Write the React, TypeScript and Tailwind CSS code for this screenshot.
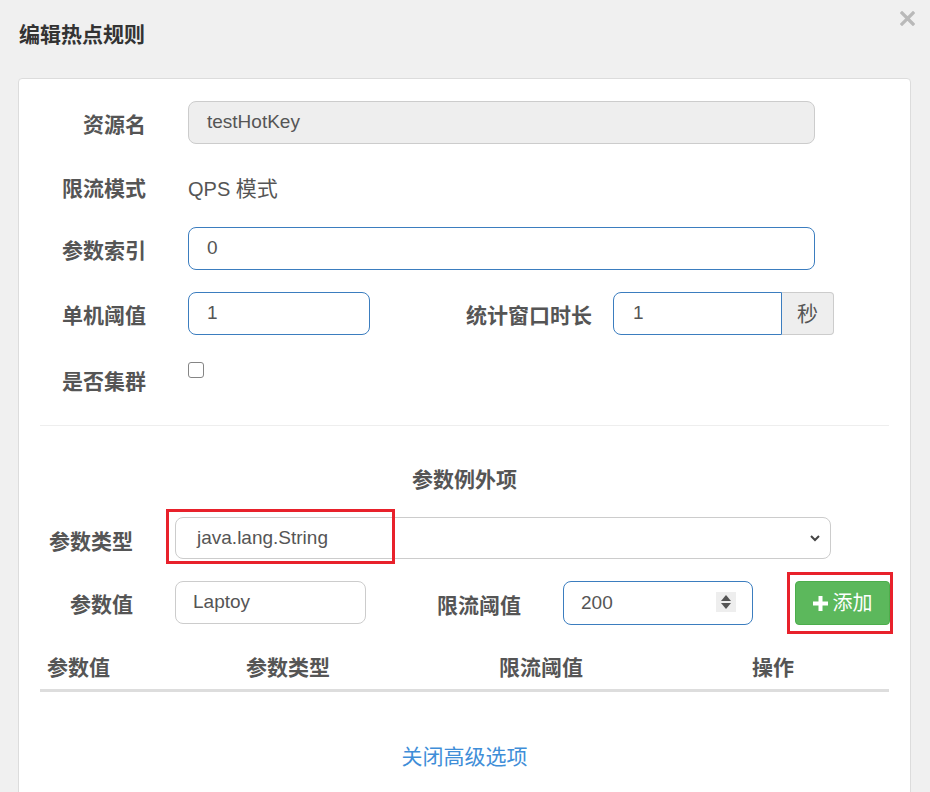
import React from "react";

const F = "font-['Liberation_Sans','Noto_Sans_CJK_SC',sans-serif]";

function Label({ w, children, pt = "pt-[9px]" }: { w: string; children: React.ReactNode; pt?: string }) {
  return (
    <div className={`${w} shrink-0 text-right text-[21px] leading-[30px] font-bold text-[#555]`}>
      <div className={pt}>{children}</div>
    </div>
  );
}

export default function App() {
  return (
    <div className={`${F} min-h-[792px] w-[930px] overflow-hidden bg-[#f0f0f0]`}>
      {/* header */}
      <div className="flex items-start justify-between pl-[19px] pr-[15px]">
        <div className="mt-[20px] text-[21px] leading-[30px] font-bold text-[#333]">编辑热点规则</div>
        <svg className="mt-[11px]" width="15" height="15" viewBox="0 0 15 15">
          <path d="M2 2 L13 13 M13 2 L2 13" stroke="#b9b9b9" strokeWidth="3.2" strokeLinecap="square" />
        </svg>
      </div>

      {/* card */}
      <div className="ml-[18px] mt-[28px] w-[893px] rounded-[4px] border border-[#dcdcdc] bg-white pt-[22px] pb-[40px]">
        {/* 资源名 */}
        <div className="mb-[20px] flex h-[43px]">
          <Label w="w-[127px]">资源名</Label>
          <div className="ml-[42px] flex h-[43px] w-[627px] items-center rounded-[8px] border border-[#cccccc] bg-[#eeeeee] pl-[18px] text-[19px] text-[#555]">
            testHotKey
          </div>
        </div>
        {/* 限流模式 */}
        <div className="mb-[20px] flex h-[43px]">
          <Label w="w-[127px]" pt="pt-[10px]">限流模式</Label>
          <div className="ml-[42px] pt-[10px] text-[20px] leading-[30px] text-[#555]">
            QPS <span className="text-[21px]">模式</span>
          </div>
        </div>
        {/* 参数索引 */}
        <div className="mb-[22px] flex h-[43px]">
          <Label w="w-[127px]">参数索引</Label>
          <div className="ml-[42px] flex h-[43px] w-[627px] items-center rounded-[8px] border border-[#3b7dbf] bg-white pl-[18px] text-[19px] text-[#555]">
            0
          </div>
        </div>
        {/* 单机阈值 / 统计窗口时长 */}
        <div className="mb-[21px] flex h-[43px]">
          <Label w="w-[127px]">单机阈值</Label>
          <div className="ml-[42px] flex h-[43px] w-[182px] shrink-0 items-center rounded-[8px] border border-[#3b7dbf] bg-white pl-[18px] text-[19px] text-[#555]">
            1
          </div>
          <Label w="w-[222px]">统计窗口时长</Label>
          <div className="ml-[21px] flex h-[43px]">
            <div className="flex h-[43px] w-[169px] items-center rounded-l-[8px] border border-[#3b7dbf] bg-white pl-[19px] text-[19px] text-[#555]">
              1
            </div>
            <div className="flex h-[43px] w-[52px] items-center justify-center rounded-r-[4px] border border-l-0 border-[#cccccc] bg-[#eeeeee] text-[21px] text-[#555]">
              秒
            </div>
          </div>
        </div>
        {/* 是否集群 */}
        <div className="flex h-[43px]">
          <Label w="w-[127px]" pt="pt-[11px]">是否集群</Label>
          <div className="ml-[42px] mt-[6px] h-[16px] w-[16px] rounded-[3px] border border-[#858585] bg-white" />
        </div>

        <div className="mx-[21px] mt-[26px] border-t border-[#eeeeee]" />

        {/* 参数例外项 */}
        <div className="mt-[39px] text-center text-[21px] leading-[30px] font-bold text-[#555]">参数例外项</div>

        {/* 参数类型 */}
        <div className="mt-[22px] flex h-[42px]">
          <Label w="w-[114px]" pt="pt-[10px]">参数类型</Label>
          <div className="relative ml-[42px]">
            <div className="flex h-[42px] w-[656px] items-center justify-between rounded-[8px] border border-[#cccccc] bg-white pl-[21px] pr-[10px] text-[19px] text-[#555]">
              <span>java.lang.String</span>
              <svg width="10" height="7" viewBox="0 0 10 7">
                <path d="M1 1 L5 5 L9 1" fill="none" stroke="#444" strokeWidth="2" />
              </svg>
            </div>
            <div className="absolute left-[-9px] top-[-8px] h-[55px] w-[229px] border-[3px] border-[#e8212b]" />
          </div>
        </div>

        {/* 参数值 / 限流阈值 / 添加 */}
        <div className="mt-[22px] flex h-[44px]">
          <Label w="w-[114px]">参数值</Label>
          <div className="ml-[42px] flex h-[43px] w-[191px] shrink-0 items-center rounded-[8px] border border-[#cccccc] bg-white pl-[17px] text-[19px] text-[#555]">
            Laptoy
          </div>
          <Label w="w-[155px]" pt="pt-[10px]">限流阈值</Label>
          <div className="relative ml-[42px] flex h-[44px] w-[190px] shrink-0 items-center rounded-[8px] border border-[#3b7dbf] bg-white pl-[17px] text-[19px] text-[#555]">
            200
            <div className="absolute right-[16px] top-[10px] flex h-[20px] w-[20px] flex-col items-center justify-center gap-[2px] bg-[#eeeeee]">
              <svg width="10" height="6" viewBox="0 0 10 6">
                <path d="M5 0 L10 6 L0 6 Z" fill="#555" />
              </svg>
              <svg width="10" height="6" viewBox="0 0 10 6">
                <path d="M0 0 L10 0 L5 6 Z" fill="#555" />
              </svg>
            </div>
          </div>
          <div className="relative ml-[42px]">
            <div className="flex h-[44px] w-[95px] items-center justify-center gap-[5px] rounded-[4px] border border-[#4cae4c] bg-[#5cb85c] text-[20px] text-white">
              <svg width="15" height="15" viewBox="0 0 15 15">
                <path d="M5.5 0 H9.5 V5.5 H15 V9.5 H9.5 V15 H5.5 V9.5 H0 V5.5 H5.5 Z" fill="white" />
              </svg>
              <span>添加</span>
            </div>
            <div className="absolute left-[-8px] top-[-9px] h-[62px] w-[106px] border-[3px] border-[#e8212b]" />
          </div>
        </div>

        {/* table header */}
        <div className="mx-[21px] mt-[20px] grid grid-cols-[199px_253px_253px_1fr] border-b-[3px] border-[#dddddd] pb-[6px] pt-[8px] pl-[7px] text-[21px] leading-[30px] font-bold text-[#555]">
          <div>参数值</div>
          <div>参数类型</div>
          <div>限流阈值</div>
          <div>操作</div>
        </div>

        <div className="mt-[50px] text-center text-[21px] leading-[30px] text-[#3f8ed8]">关闭高级选项</div>
      </div>
    </div>
  );
}
